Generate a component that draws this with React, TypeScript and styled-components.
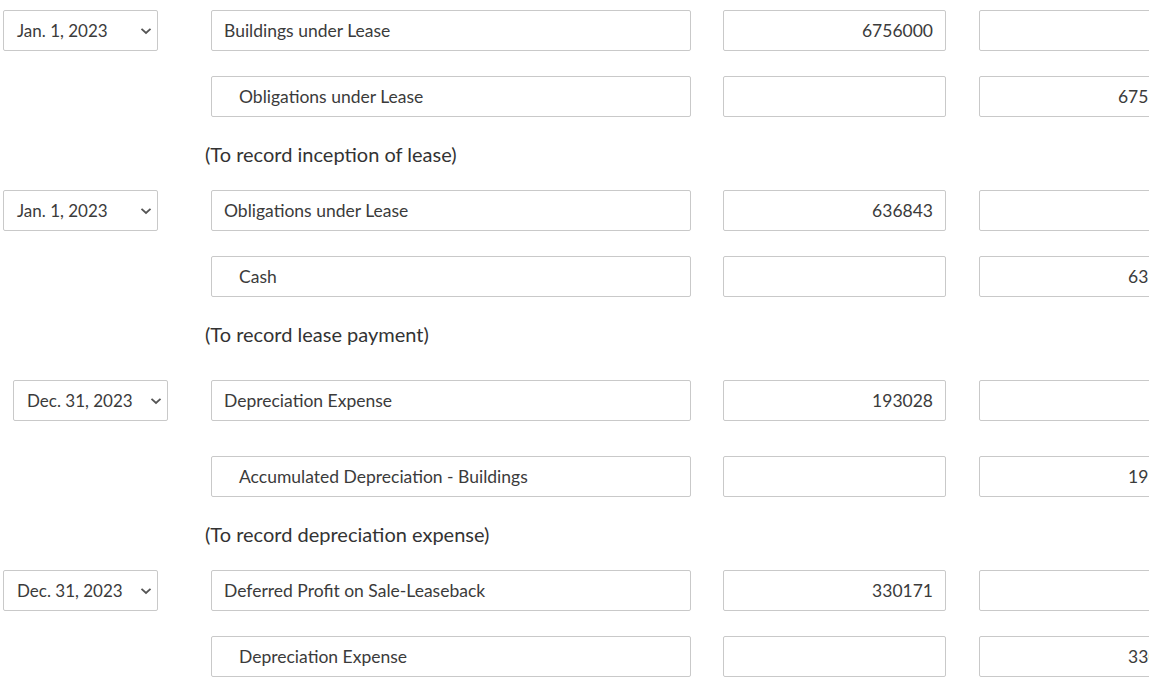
import React from "react";
import styled, { createGlobalStyle } from "styled-components";

const Global = createGlobalStyle`
  html, body { margin: 0; padding: 0; background: #fff; }
  body { font-family: Lato, "Open Sans", sans-serif; color: #333; }
`;

const Page = styled.div`
  width: 1149px;
  overflow: hidden;
  padding: 10px 0 0 3px;
  box-sizing: border-box;
`;

const Group = styled.section`
  display: flex;
  flex-direction: column;
  gap: 25px;
`;

const Row = styled.div`
  display: grid;
  grid-template-columns: 208px 512px 256px 223px;
  align-items: center;
`;

const DateSelect = styled.div<{ $inset?: boolean }>`
  box-sizing: border-box;
  width: 155px;
  height: 41px;
  margin: ${(p) => (p.$inset ? "10px 0 10px 10px" : "0")};
  border: 1px solid #c9c9c9;
  border-radius: 2px;
  display: flex;
  align-items: center;
  justify-content: space-between;
  padding: 0 5px 0 13px;
  font-size: 17px;
  color: #3b3b3b;
  background: #fff;
`;

const Chevron = styled.svg`
  width: 12px;
  height: 8px;
`;

const Field = styled.div<{ $width: number; $align?: "left" | "right"; $indent?: boolean }>`
  box-sizing: border-box;
  width: ${(p) => p.$width}px;
  height: 41px;
  border: 1px solid #c9c9c9;
  border-radius: 2px;
  display: flex;
  align-items: center;
  justify-content: ${(p) => (p.$align === "right" ? "flex-end" : "flex-start")};
  padding: ${(p) => (p.$indent ? "0 12px 0 27px" : "0 12px 0 12px")};
  font-size: 17.5px;
  color: #3b3b3b;
  background: #fff;
  white-space: nowrap;
`;

const Comment = styled.div`
  margin: 0 0 0 202px;
  height: 26px;
  line-height: 24px;
  font-size: 20px;
  color: #333;
`;

const EntryBlock = styled.div`
  margin-bottom: 22px;
`;

type Line = { account: string; debit?: string; credit?: string };
type Entry = { date: string; inset?: boolean; lines: Line[]; note: string };

const entries: Entry[] = [
  {
    date: "Jan. 1, 2023",
    lines: [
      { account: "Buildings under Lease", debit: "6756000" },
      { account: "Obligations under Lease", credit: "6756000" },
    ],
    note: "(To record inception of lease)",
  },
  {
    date: "Jan. 1, 2023",
    lines: [
      { account: "Obligations under Lease", debit: "636843" },
      { account: "Cash", credit: "636843" },
    ],
    note: "(To record lease payment)",
  },
  {
    date: "Dec. 31, 2023",
    inset: true,
    lines: [
      { account: "Depreciation Expense", debit: "193028" },
      { account: "Accumulated Depreciation - Buildings", credit: "193028" },
    ],
    note: "(To record depreciation expense)",
  },
  {
    date: "Dec. 31, 2023",
    lines: [
      { account: "Deferred Profit on Sale-Leaseback", debit: "330171" },
      { account: "Depreciation Expense", credit: "330171" },
    ],
    note: "",
  },
];

const ChevronIcon = () => (
  <Chevron viewBox="0 0 12 8">
    <path d="M1.5 1.8 L6 6 L10.5 1.8" fill="none" stroke="#555" strokeWidth="1.8" />
  </Chevron>
);

export default function App() {
  return (
    <>
      <Global />
      <Page>
        {entries.map((e, i) => (
          <EntryBlock key={i}>
            <Group>
              {e.lines.map((l, j) => (
                <Row key={j}>
                  <div>
                    {j === 0 && (
                      <DateSelect $inset={e.inset}>
                        <span>{e.date}</span>
                        <ChevronIcon />
                      </DateSelect>
                    )}
                  </div>
                  <Field $width={480} $indent={j > 0}>
                    {l.account}
                  </Field>
                  <Field $width={223} $align="right">
                    {l.debit ?? ""}
                  </Field>
                  <Field $width={223} $align="right">
                    {l.credit ?? ""}
                  </Field>
                </Row>
              ))}
              {e.note && <Comment>{e.note}</Comment>}
            </Group>
          </EntryBlock>
        ))}
      </Page>
    </>
  );
}
